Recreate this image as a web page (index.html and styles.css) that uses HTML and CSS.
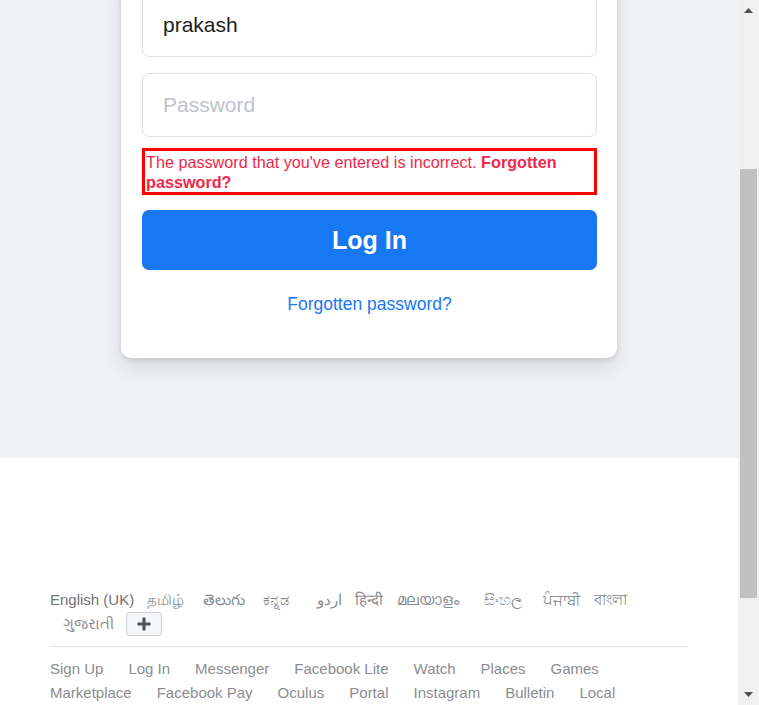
FILE: index.html
```html
<!DOCTYPE html>
<html lang="en">
<head>
<meta charset="utf-8">
<title>Facebook – log in</title>
<link rel="stylesheet" href="styles.css">
</head>
<body>
<div class="viewport">
  <section class="top">
    <div class="card">
      <div class="field field-filled">prakash</div>
      <div class="field field-empty">Password</div>
      <div class="error">The password that you've entered is incorrect. <b>Forgotten password?</b></div>
      <div class="btn-login">Log In</div>
      <div class="forgot">Forgotten password?</div>
    </div>
  </section>
  <footer class="footer">
    <div class="footer-inner">
      <ul class="langs">
        <li class="lang-current">English (UK)</li>
        <li class="l-ta">தமிழ்</li>
        <li class="l-te">తెలుగు</li>
        <li class="l-kn">ಕನ್ನಡ</li>
        <li class="l-ur">اردو</li>
        <li class="l-hi">हिन्दी</li>
        <li class="l-ml">മലയാളം</li>
        <li class="l-si">සිංහල</li>
        <li class="l-pa">ਪੰਜਾਬੀ</li>
        <li class="l-bn">বাংলা</li>
        <li class="l-gu">ગુજરાતી</li>
        <li><span class="more"><svg width="16" height="16" viewBox="0 0 16 16"><path d="M6.5 1.5h3v5h5v3h-5v5h-3v-5h-5v-3h5z" fill="#4b4f56"/></svg></span></li>
      </ul>
      <div class="divider"></div>
      <ul class="links">
        <li>Sign Up</li>
        <li>Log In</li>
        <li>Messenger</li>
        <li>Facebook Lite</li>
        <li>Watch</li>
        <li>Places</li>
        <li>Games</li>
        <li>Marketplace</li>
        <li>Facebook Pay</li>
        <li>Oculus</li>
        <li>Portal</li>
        <li>Instagram</li>
        <li>Bulletin</li>
        <li>Local</li>
      </ul>
    </div>
  </footer>
</div>
<div class="scrollbar">
  <div class="sb-arrow"><svg width="9" height="5" viewBox="0 0 9 5"><path d="M0 5L4.5 0L9 5z" fill="#505050"/></svg></div>
  <div class="sb-track"><div class="sb-thumb"></div></div>
  <div class="sb-arrow"><svg width="9" height="5" viewBox="0 0 9 5"><path d="M0 0L9 0L4.5 5z" fill="#505050"/></svg></div>
</div>
</body>
</html>
```

FILE: styles.css
```css
* { box-sizing: border-box; }
html, body { margin: 0; padding: 0; }
body {
  display: flex;
  height: 705px;
  overflow: hidden;
  font-family: "Liberation Sans", Arial, sans-serif;
  background: #fff;
}
.viewport {
  flex: 1;
  min-width: 0;
  display: flex;
  flex-direction: column;
  overflow: hidden;
}
.top {
  height: 458px;
  flex: none;
  background: #f0f2f5;
  display: flex;
  justify-content: center;
  align-items: flex-start;
}
.card {
  width: 496px;
  margin-top: -27px;
  padding: 20px 20px 44px 21px;
  background: #fff;
  border-radius: 10px;
  box-shadow: 0 2px 5px rgba(0,0,0,.1), 0 10px 20px rgba(0,0,0,.1);
  display: flex;
  flex-direction: column;
}
.field {
  height: 64px;
  border: 1px solid #dddfe2;
  border-radius: 7px;
  padding: 0 20px;
  display: flex;
  align-items: center;
  font-size: 21px;
}
.field-filled { color: #1c1e21; }
.field-empty { color: #bec3c9; margin-top: 16px; }
.error {
  margin-top: 11px;
  border: 3px solid #ff0000;
  padding: 1px 1px 0;
  color: #f02849;
  font-size: 16.2px;
  line-height: 20px;
}
.error b { font-weight: bold; }
.btn-login {
  margin-top: 15px;
  height: 60px;
  border-radius: 7px;
  background: #1877f2;
  color: #fff;
  font-size: 25px;
  font-weight: bold;
  display: flex;
  align-items: center;
  justify-content: center;
}
.forgot {
  margin-top: 24px;
  line-height: 20px;
  text-align: center;
  color: #1877f2;
  font-size: 17.5px;
}
.footer {
  flex: 1;
  background: #fff;
  padding-top: 131px;
}
.footer-inner {
  width: 638px;
  margin: 0 auto;
}
.langs, .links {
  list-style: none;
  margin: 0;
  padding: 0;
  display: flex;
  flex-wrap: wrap;
  align-items: center;
}
.langs {
  font-size: 15px;
  line-height: 22px;
  color: #8a8d91;
}
.langs li { margin-left: 12.5px; white-space: nowrap; }
.langs li:first-child { margin-left: 0; }
.lang-current { color: #737373; }
.l-ta { min-width: 44px; }
.l-te { min-width: 47px; }
.l-kn { min-width: 42px; }
.l-ur { min-width: 22px; }
.l-hi { min-width: 30px; }
.l-ml { min-width: 74px; }
.l-si { min-width: 47px; }
.l-pa { min-width: 36px; }
.l-bn { min-width: 35px; }
.l-gu { min-width: 50px; }
.more {
  display: flex;
  align-items: center;
  justify-content: center;
  width: 36px;
  height: 24px;
  margin-top: 1px;
  border: 1px solid #ccd0d5;
  border-radius: 3px;
  background: #f5f6f7;
}
.divider {
  height: 1px;
  background: #dddfe2;
  margin: 10px 0 10px;
}
.links {
  font-size: 15px;
  line-height: 24px;
  color: #8a8d91;
}
.links li { margin-right: 25px; }
.scrollbar {
  width: 21px;
  flex: none;
  background: #f0f0f0;
  display: flex;
  flex-direction: column;
}
.sb-arrow {
  height: 21px;
  display: flex;
  align-items: center;
  justify-content: center;
}
.sb-track {
  flex: 1;
  padding: 148px 2px 86px;
  display: flex;
}
.sb-thumb {
  flex: 1;
  background: #c1c1c1;
}
```
